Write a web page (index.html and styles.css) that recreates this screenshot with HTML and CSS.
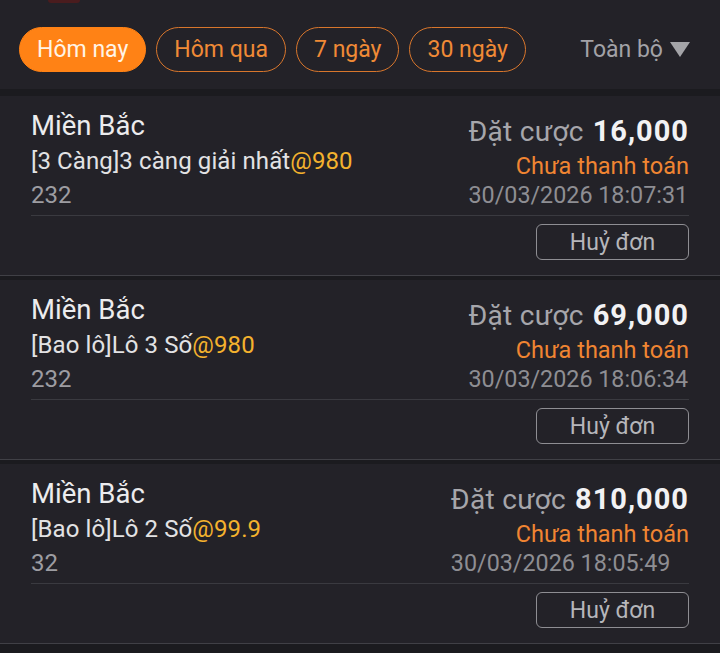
FILE: index.html
```html
<!DOCTYPE html>
<html lang="vi">
<head>
<meta charset="utf-8">
<title>Đơn cược</title>
<link rel="stylesheet" href="styles.css">
</head>
<body>
<div class="header">
  <div class="top-mark"></div>
  <div class="filter-row">
    <div class="tabs">
      <span class="tab tab-active">Hôm nay</span>
      <span class="tab">Hôm qua</span>
      <span class="tab">7 ngày</span>
      <span class="tab">30 ngày</span>
    </div>
    <div class="dropdown">
      <span>Toàn bộ</span>
      <svg class="caret" width="20" height="15" viewBox="0 0 20 15"><polygon points="0,0 20,0 10,15" fill="#a4a4a8"/></svg>
    </div>
  </div>
</div>

<div class="list">
  <div class="card">
    <div class="card-top">
      <div class="left">
        <div class="title">Miền Bắc</div>
        <div class="play">[3 Càng]3 càng giải nhất<span class="odds">@980</span></div>
        <div class="nums">232</div>
      </div>
      <div class="right">
        <div class="amount"><span class="amt-label">Đặt cược</span><b class="amt-val">16,000</b></div>
        <div class="status">Chưa thanh toán</div>
        <div class="date">30/03/2026 18:07:31</div>
      </div>
    </div>
    <div class="divider"></div>
    <div class="actions"><span class="btn">Huỷ đơn</span></div>
  </div>

  <div class="card">
    <div class="card-top">
      <div class="left">
        <div class="title">Miền Bắc</div>
        <div class="play">[Bao lô]Lô 3 Số<span class="odds">@980</span></div>
        <div class="nums">232</div>
      </div>
      <div class="right">
        <div class="amount"><span class="amt-label">Đặt cược</span><b class="amt-val">69,000</b></div>
        <div class="status">Chưa thanh toán</div>
        <div class="date">30/03/2026 18:06:34</div>
      </div>
    </div>
    <div class="divider"></div>
    <div class="actions"><span class="btn">Huỷ đơn</span></div>
  </div>

  <div class="card">
    <div class="card-top">
      <div class="left">
        <div class="title">Miền Bắc</div>
        <div class="play">[Bao lô]Lô 2 Số<span class="odds">@99.9</span></div>
        <div class="nums">32</div>
      </div>
      <div class="right">
        <div class="amount"><span class="amt-label">Đặt cược</span><b class="amt-val">810,000</b></div>
        <div class="status">Chưa thanh toán</div>
        <div class="date">30/03/2026 18:05:49</div>
      </div>
    </div>
    <div class="divider"></div>
    <div class="actions"><span class="btn">Huỷ đơn</span></div>
  </div>
</div>
</body>
</html>
```

FILE: styles.css
```css
* { box-sizing: border-box; }
html, body {
  margin: 0;
  padding: 0;
  background: #1b1b1f;
  font-family: Roboto, "Noto Sans", "Liberation Sans", sans-serif;
  color: #ececee;
}
.header {
  background: #232228;
  height: 89px;
  margin-bottom: 7px;
}
.top-mark {
  width: 32px;
  height: 3px;
  margin-left: 48px;
  background: #4a1c1e;
  border-radius: 0 0 4px 4px;
}
.filter-row {
  display: flex;
  align-items: center;
  justify-content: space-between;
  padding: 24px 30px 0 19px;
}
.tabs {
  display: flex;
  gap: 10px;
}
.tab {
  display: flex;
  align-items: center;
  justify-content: center;
  height: 45px;
  padding: 0 17px;
  border: 1px solid #d8762c;
  border-radius: 23px;
  color: #f08a36;
  font-size: 23px;
}
.tab-active {
  background: #ff8215;
  border-color: #ff8215;
  color: #fff4e6;
}
.dropdown {
  display: flex;
  align-items: center;
  gap: 7px;
  color: #a2a2a7;
  font-size: 23px;
}
.caret { display: block; }

.list {
  display: flex;
  flex-direction: column;
  gap: 4px;
}
.card {
  background: #232228;
  border-bottom: 1px solid #404046;
  padding: 13px 31px 15px 31px;
}
.card-top {
  display: flex;
  justify-content: space-between;
  padding-bottom: 4px;
}
.left { display: flex; flex-direction: column; }
.title {
  font-size: 27.5px;
  line-height: 34px;
  height: 34px;
  color: #ececee;
}
.play {
  font-size: 24px;
  line-height: 36px;
  height: 36px;
  color: #e2e2e4;
  letter-spacing: 0.1px;
}
.odds { color: #f4b22e; }
.nums {
  font-size: 24px;
  line-height: 32px;
  height: 32px;
  color: #9d9da2;
}
.right {
  display: flex;
  flex-direction: column;
  align-items: flex-end;
}
.amount {
  display: flex;
  align-items: baseline;
  gap: 9px;
  height: 44px;
  line-height: 44px;
  white-space: nowrap;
}
.amt-label { color: #a6a6ab; font-size: 28px; letter-spacing: 0.3px; }
.amt-val { color: #f2f2f4; font-weight: 700; font-size: 29px; letter-spacing: 1px; }
.status {
  font-size: 23.5px;
  line-height: 26px;
  height: 26px;
  color: #f08532;
}
.date {
  align-self: flex-start;
  font-size: 23.3px;
  line-height: 32px;
  height: 32px;
  color: #8e8e93;
  white-space: nowrap;
}
.divider {
  height: 1px;
  background: #3a3a40;
}
.actions {
  display: flex;
  justify-content: flex-end;
  padding-top: 8px;
}
.btn {
  display: flex;
  align-items: center;
  justify-content: center;
  width: 153px;
  height: 36px;
  border: 1px solid #8e8e93;
  border-radius: 6px;
  font-size: 23px;
  color: #b6b6ba;
}
```
